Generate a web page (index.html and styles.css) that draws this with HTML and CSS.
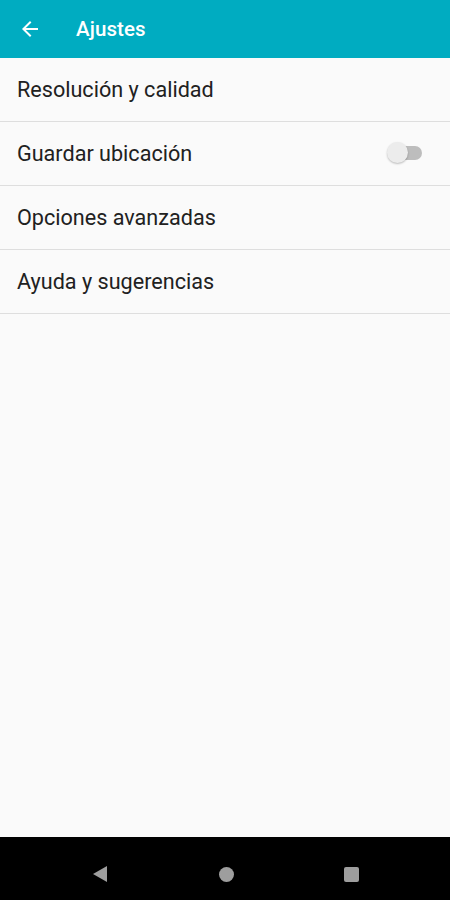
FILE: index.html
```html
<!DOCTYPE html>
<html lang="es">
<head>
<meta charset="utf-8">
<title>Ajustes</title>
<link rel="stylesheet" href="styles.css">
</head>
<body>
<div class="screen">
  <header class="appbar">
    <button class="back" aria-label="Atrás">
      <svg width="24" height="24" viewBox="0 0 24 24"><path d="M20 11H7.83l5.59-5.59L12 4l-8 8 8 8 1.41-1.41L7.83 13H20v-2z" fill="#fff"/></svg>
    </button>
    <h1 class="title">Ajustes</h1>
  </header>
  <main class="list">
    <div class="item"><span class="label">Resolución y calidad</span></div>
    <div class="item"><span class="label">Guardar ubicación</span><span class="switch"><span class="track"></span><span class="thumb"></span></span></div>
    <div class="item"><span class="label">Opciones avanzadas</span></div>
    <div class="item"><span class="label">Ayuda y sugerencias</span></div>
  </main>
  <nav class="navbar">
    <svg class="nav-back" width="16" height="18" viewBox="0 0 16 18"><path d="M15 1 L1 9 L15 17 Z" fill="#9e9e9e"/></svg>
    <span class="nav-home"></span>
    <span class="nav-recent"></span>
  </nav>
</div>
</body>
</html>
```
FILE: styles.css
```css
* { box-sizing: border-box; }
html, body { margin: 0; padding: 0; }
body { font-family: Roboto, "Noto Sans", sans-serif; background: #fafafa; }
.screen { width: 450px; height: 900px; display: flex; flex-direction: column; background: #fafafa; }
.appbar { height: 58px; background: #00acc1; display: flex; align-items: center; flex-shrink: 0; }
.back { width: 60px; height: 58px; border: 0; background: none; padding: 0 0 0 18px; display: flex; align-items: center; }
.title { margin: 0 0 0 16px; color: #fff; font-size: 20.5px; font-weight: 500; letter-spacing: 0.1px; }
.list { flex: 1; }
.item { height: 64px; border-bottom: 1px solid #dedede; display: flex; align-items: center; justify-content: space-between; padding: 0 28px 1px 17px; }
.label { font-size: 21.6px; color: #212121; }
.switch { position: relative; width: 36px; height: 22px; display: block; }
.track { position: absolute; left: 2px; top: 4px; width: 34px; height: 14px; border-radius: 7px; background: #bdbdbd; }
.thumb { position: absolute; left: 1px; top: 0; width: 21px; height: 21px; border-radius: 50%; background: #ececec; box-shadow: 0 1px 2px rgba(0,0,0,0.25); }
.navbar { height: 63px; background: #000; display: flex; align-items: center; justify-content: center; padding-top: 11px; flex-shrink: 0; }
.nav-back { width: 16px; height: 18px; }
.nav-home { width: 15px; height: 15px; border-radius: 50%; background: #9e9e9e; margin-left: 111px; }
.nav-recent { width: 15px; height: 15px; border-radius: 2px; background: #9e9e9e; margin-left: 110px; }
```
